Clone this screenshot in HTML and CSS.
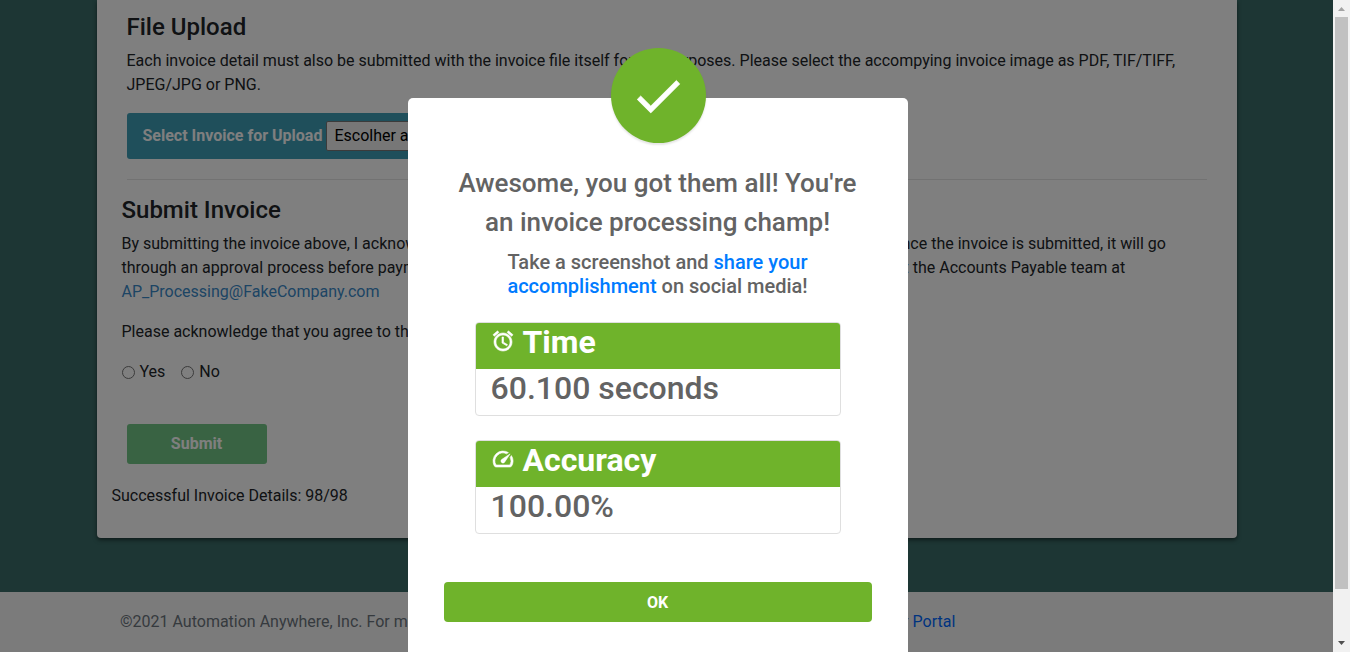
FILE: index.html
```html
<!DOCTYPE html>
<html lang="en">
<head>
<meta charset="utf-8">
<title>Invoice Processing</title>
<link rel="stylesheet" href="styles.css">
</head>
<body>
<div class="page">
  <main class="card">
    <section class="upload">
      <h4 class="title">File Upload</h4>
      <p class="text">Each invoice detail must also be submitted with the invoice file itself for our purposes. Please select the accompying invoice image as PDF, TIF/TIFF, JPEG/JPG or PNG.</p>
      <div class="upload-box">
        <label class="upload-label" for="file">Select Invoice for Upload</label>
        <button class="file-button" id="file" type="button">Escolher arquivo</button>
      </div>
    </section>
    <hr class="rule">
    <section class="submit">
      <h4 class="title">Submit Invoice</h4>
      <p class="text">By submitting the invoice above, I acknowledge that all of the information entered here is true and complete. Once the invoice is submitted, it will go<br>through an approval process before payment is made to the vendor. For any questions or any concerns, contact the Accounts Payable team at<br><a class="mail" href="mailto:AP_Processing@FakeCompany.com">AP_Processing@FakeCompany.com</a></p>
      <p class="text">Please acknowledge that you agree to the terms above.</p>
      <div class="choices">
        <label class="choice"><input class="radio" type="radio" name="agree">Yes</label>
        <label class="choice"><input class="radio" type="radio" name="agree">No</label>
      </div>
    </section>
    <button class="submit-button" type="button">Submit</button>
    <p class="result">Successful Invoice Details: 98/98</p>
  </main>
  <footer class="footer">
    <p class="footer-text">©2021 Automation Anywhere, Inc. For more information or resources, visit the Automation Anywhere Developer <a class="portal" href="#">Portal</a></p>
  </footer>
  <div class="overlay">
    <div class="modal" role="dialog" aria-labelledby="modal-title">
      <div class="badge">
        <svg class="check" viewBox="0 0 24 24" aria-hidden="true"><path d="M9 16.17L4.83 12l-1.42 1.41L9 19 21 7l-1.41-1.41z"/></svg>
      </div>
      <h4 class="modal-title" id="modal-title">Awesome, you got them all! You're an invoice processing champ!</h4>
      <h5 class="modal-sub">Take a screenshot and <a class="share" href="#">share your accomplishment</a> on social media!</h5>
      <div class="stat">
        <h2 class="stat-head"><svg class="icon" viewBox="0 0 24 24" aria-hidden="true"><path d="M22 5.72l-4.6-3.86-1.29 1.53 4.6 3.86L22 5.72zM7.88 3.39L6.6 1.86 2 5.71l1.29 1.53 4.59-3.85zM12.5 8H11v6l4.75 2.85.75-1.23-4-2.37V8zM12 4c-4.97 0-9 4.03-9 9s4.02 9 9 9c4.97 0 9-4.03 9-9s-4.03-9-9-9zm0 16c-3.87 0-7-3.13-7-7s3.13-7 7-7 7 3.13 7 7-3.13 7-7 7z"/></svg>Time</h2>
        <p class="stat-value">60.100 seconds</p>
      </div>
      <div class="stat">
        <h2 class="stat-head"><svg class="icon" viewBox="0 0 24 24" aria-hidden="true"><path d="M20.38 8.57l-1.23 1.85a8 8 0 0 1-.22 7.58H5.07A8 8 0 0 1 15.58 6.85l1.85-1.23A10 10 0 0 0 3.35 19a2 2 0 0 0 1.720 1h13.850a2 2 0 0 0 1.740-1 10 10 0 0 0-.27-10.440zm-9.790 6.840a2 2 0 0 0 2.830 0l5.660-8.490-8.490 5.660a2 2 0 0 0 0 2.830z"/></svg>Accuracy</h2>
        <p class="stat-value">100.00%</p>
      </div>
      <button class="ok" type="button">OK</button>
    </div>
  </div>
</div>
<div class="scrollbar" aria-hidden="true">
  <svg class="arrow arrow-up" viewBox="0 0 17 17"><path d="M5 11h7L8.500 7z"/></svg>
  <div class="thumb"></div>
  <svg class="arrow" viewBox="0 0 17 17"><path d="M5 6h7L8.500 10z"/></svg>
</div>
</body>
</html>
```
FILE: styles.css
```css
* { box-sizing: border-box; }
body {
  margin: 0;
  display: flex;
  height: 100vh;
  overflow: hidden;
  font: 400 16px/24px Roboto, sans-serif;
  color: #212529;
}
h2, h4, h5, p { margin: 0; }
a { text-decoration: none; }
button { font-family: inherit; }

.page {
  position: relative;
  flex: 1;
  min-width: 0;
  overflow: hidden;
  display: flex;
  flex-direction: column;
  background: #3a6c68;
}
.card {
  width: 100%;
  max-width: 1140px;
  margin: 0 auto 54px;
  padding: 13px 30px 30px;
  background: #fff;
  border-radius: 0 0 4px 4px;
  box-shadow: 0 2px 4px rgba(0, 0, 0, .5);
}
.title {
  margin-bottom: 8px;
  font-size: 24px;
  line-height: 28px;
  font-weight: 500;
}
.text { margin-bottom: 16px; }
.upload-box {
  display: flex;
  align-items: center;
  gap: 4px;
  width: 520px;
  max-width: 100%;
  padding: 8px 16px;
  border-radius: 3px;
  background: #3e9eb6;
}
.upload-label { color: #fff; font-weight: 700; }
.file-button {
  height: 30px;
  padding: 0 7px 2px;
  border: 1px solid #767676;
  border-radius: 2px;
  background: #efefef;
  color: #000;
  font-size: 16px;
}
.rule {
  margin: 20px 0 16px;
  border: 0;
  border-top: 1px solid rgba(0, 0, 0, .1);
}
.submit { margin: 0 -5px; }
.mail { color: #3b8ac9; }
.choices { display: flex; gap: 16px; }
.choice { display: flex; align-items: center; gap: 5px; }
.radio { width: 13px; height: 13px; margin: 0; }
.submit-button {
  display: block;
  width: 140px;
  height: 40px;
  margin: 40px 0 20px;
  padding: 0 0 2px;
  border: 0;
  border-radius: 3px;
  background: #73c686;
  color: #fff;
  font-size: 16px;
  font-weight: 700;
}
.result { margin-left: -15px; }
.footer {
  flex: 1;
  padding: 18px 24px;
  background: #f7f7f7;
  color: #6c757d;
}
.footer-text {
  max-width: 1093px;
  margin: 0 auto;
  white-space: nowrap;
}
.portal { color: #0069ff; }

.overlay {
  position: absolute;
  inset: 0;
  display: flex;
  justify-content: center;
  align-items: flex-start;
  padding: 98px 18px 0 0;
  background: rgba(0, 0, 0, .5);
}
.modal {
  position: relative;
  width: 500px;
  flex-shrink: 0;
  display: flex;
  flex-direction: column;
  align-items: center;
  padding: 66px 36px 36px;
  border-radius: 5px;
  background: #fff;
  color: #636363;
  text-align: center;
}
.badge {
  position: absolute;
  top: -50px;
  left: 50%;
  width: 95px;
  height: 95px;
  margin-left: -47px;
  display: grid;
  place-items: center;
  border-radius: 50%;
  background: #6fb32b;
  box-shadow: 0 2px 2px rgba(0, 0, 0, .1);
}
.check { width: 58px; height: 58px; fill: #fff; stroke: #fff; stroke-width: .3; }
.modal-title {
  margin-bottom: 8px;
  font-size: 26px;
  line-height: 39px;
  font-weight: 500;
}
.modal-sub {
  max-width: 336px;
  margin-bottom: 24px;
  font-size: 20px;
  line-height: 24px;
  font-weight: 500;
}
.share { color: #007bff; }
.stat {
  width: 366px;
  margin-bottom: 24px;
  overflow: hidden;
  border: 1px solid #dfdfdf;
  border-radius: 4px;
  text-align: left;
}
.stat-head, .stat-value {
  padding: 0 15px 8px;
  font-size: 32px;
  line-height: 38px;
}
.stat-head {
  display: flex;
  gap: 8px;
  background: #6fb32b;
  color: #fff;
  font-weight: 700;
}
.icon {
  width: 24px;
  height: 24px;
  margin-top: 6px;
  fill: currentColor;
  stroke: currentColor;
  stroke-width: .6;
}
.stat-value { font-weight: 500; }
.ok {
  width: 100%;
  height: 40px;
  margin-top: 24px;
  margin-bottom: 36px;
  border: 0;
  border-radius: 4px;
  background: #6fb32b;
  color: #fff;
  font-size: 16px;
  font-weight: 700;
}

.scrollbar {
  width: 17px;
  display: flex;
  flex-direction: column;
  align-items: center;
  background: #f1f1f1;
}
.arrow { width: 17px; height: 17px; fill: #505050; }
.arrow-up { fill: #a3a3a3; }
.thumb { width: 13px; height: 572px; margin-bottom: auto; background: #c1c1c1; }
```
